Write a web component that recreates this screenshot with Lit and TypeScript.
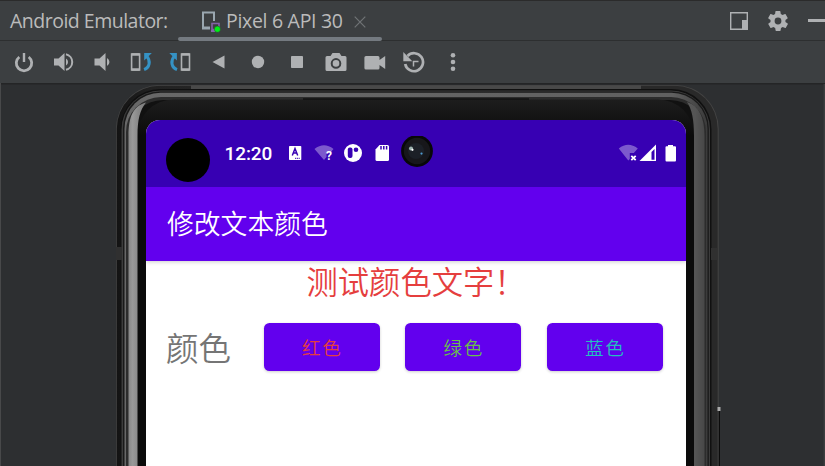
import { LitElement, html, css, svg } from "lit";
import { customElement } from "lit/decorators.js";

@customElement("emulator-tabs")
class EmulatorTabs extends LitElement {
  static styles = css`
    :host { display: flex; height: 41px; box-sizing: border-box; border-top: 1px solid #2b2b2b; border-bottom: 1px solid #2d2f30; background: #3c3f41; color: #bbb; font: 19.5px "Open Sans", "Noto Sans", sans-serif; }
    .label { box-sizing: border-box; width: 178px; padding-left: 10px; line-height: 39px; white-space: nowrap; letter-spacing: -0.5px; }
    .tab { position: relative; width: 204px; display: flex; align-items: center; height: 39px; box-sizing: border-box; padding-left: 24px; }
    .tab::after { content: ""; position: absolute; left: 0; right: 0; bottom: -1px; height: 4px; border-radius: 2px; background: #747a80; }
    .name { margin-left: 4px; width: 128px; white-space: nowrap; letter-spacing: -0.3px; }
    .tools { margin-left: auto; display: flex; align-items: center; height: 39px; }
    svg { display: block; flex: none; }
    .close { margin-top: 2px; }
    .gear { margin-left: 20px; }
    .min { margin-left: 20px; width: 17px; height: 3px; background: #afb1b3; }
  `;
  render() {
    return html`
      <div class="label">Android Emulator:</div>
      <div class="tab">
        <svg width="20" height="24" viewBox="0 0 20 24">
          <path d="M12 12V3.5H1V19H8" fill="none" stroke="#9aa7b0" stroke-width="2"/>
          <path d="M0 17.5h8v3H0z" fill="#9aa7b0"/>
          <path d="M10 14.5h7v6h-7z" fill="none" stroke="#8463a6" stroke-width="1.6"/><path d="M9 21h6v2H9z" fill="#8463a6"/>
          <circle cx="15.4" cy="20.2" r="3.1" fill="#00f018" stroke="#333" stroke-width=".5"/>
        </svg>
        <span class="name">Pixel 6 API 30</span>
        <svg class="close" width="12" height="12" viewBox="0 0 12 12"><path d="M.7.7l10.6 10.6M11.3.7L.7 11.3" stroke="#707476" stroke-width="1.2"/></svg>
      </div>
      <div class="tools">
        <svg width="18" height="18" viewBox="0 0 18 18"><path d="M.7.7h16.6v16.6H.7z" fill="none" stroke="#afb1b3" stroke-width="1.4"/><path d="M12 8h6v10h-6z" fill="#afb1b3"/></svg>
        <svg class="gear" width="20" height="20" viewBox="2 2 20 20"><path fill="#afb1b3" d="M19.4 13c0-.3.1-.7.1-1s0-.7-.1-1l2.1-1.6c.2-.2.3-.4.1-.7l-2-3.4c-.1-.2-.4-.3-.6-.2l-2.5 1c-.5-.4-1.1-.7-1.7-1l-.4-2.6c0-.2-.2-.5-.5-.5h-4c-.2 0-.4.2-.5.5L9.1 5.1c-.6.3-1.2.6-1.7 1l-2.5-1c-.2-.1-.5 0-.6.2l-2 3.4c-.1.2-.1.5.1.7L4.6 11c-.1.3-.1.7-.1 1s0 .7.1 1l-2.1 1.6c-.2.2-.3.4-.1.7l2 3.4c.1.2.4.3.6.2l2.5-1c.5.4 1.1.7 1.7 1l.4 2.6c0 .2.2.5.5.5h4c.2 0 .4-.3.5-.5l.4-2.6c.6-.3 1.2-.6 1.7-1l2.5 1c.2.1.5 0 .6-.2l2-3.4c.1-.2.1-.5-.1-.7L19.4 13zM12 15.4a3.4 3.4 0 1 1 0-6.8 3.4 3.4 0 0 1 0 6.8z"/></svg>
        <div class="min"></div>
      </div>`;
  }
}

const phoneTurn = svg`<path d="M1 3h8v16H1z" fill="none" stroke="#afb1b3" stroke-width="1.6"/><path d="M1 3.5h8M1 18.5h8" stroke="#afb1b3" stroke-width="2.5"/><path d="M13.5 18.6C19 16.5 20.5 10 16 5" fill="none" stroke="#3592c4" stroke-width="3"/><path d="M13.6 2h7.6l-7.6 7.6z" fill="#3592c4"/>`;

const toolIcons = [
  svg`<path d="M6.3 6A7.7 7.7 0 1 0 15.7 6" fill="none" stroke="#afb1b3" stroke-width="2.8"/><path d="M11 2v9" stroke="#afb1b3" stroke-width="2.4"/>`,
  svg`<path d="M2 7.5h4.5l6-5.5v18l-6-5.5H2z" fill="#afb1b3"/><path d="M14 7.5a4 4 0 0 1 0 7z" fill="#afb1b3"/><path d="M14 3.2a8 8 0 0 1 0 15.6" fill="none" stroke="#afb1b3" stroke-width="2"/>`,
  svg`<path d="M3.5 7.5h5l6-5.5v18l-6-5.5h-5z" fill="#afb1b3"/><path d="M16 7a4.5 4.5 0 0 1 0 8z" fill="#afb1b3"/>`,
  svg`<g transform="translate(.6 0)">${phoneTurn}</g>`,
  svg`<g transform="translate(21.5 0) scale(-1 1)">${phoneTurn}</g>`,
  svg`<path d="M4.5 11l12-6.5v13z" fill="#afb1b3"/>`,
  svg`<circle cx="11" cy="11" r="6.2" fill="#afb1b3"/>`,
  svg`<rect x="5" y="5" width="12" height="12" rx=".8" fill="#afb1b3"/>`,
  svg`<path d="M7.5 2h7l2 3h3.5q1.5 0 1.5 1.5v12Q21.5 20 20 20H2Q.5 20 .5 18.5v-12Q.5 5 2 5h3.5z" fill="#afb1b3"/><circle cx="11" cy="12.4" r="4.3" fill="none" stroke="#3c3f41" stroke-width="2"/>`,
  svg`<path d="M2 5h12q1.5 0 1.5 1.5V9l5.7-4v13l-5.7-4v3q0 1.5-1.5 1.5H2Q.4 18.5.4 17V6.5Q.4 5 2 5z" fill="#afb1b3"/>`,
  svg`<path d="M4.5 5A9 9 0 1 1 2.2 13" fill="none" stroke="#afb1b3" stroke-width="2.7"/><path d="M.3 1v9.3h9z" fill="#afb1b3"/><path d="M10.5 15.5v-5h5" fill="none" stroke="#afb1b3" stroke-width="1.5"/>`,
  svg`<circle cx="11" cy="4.3" r="2.3" fill="#afb1b3"/><circle cx="11" cy="11" r="2.3" fill="#afb1b3"/><circle cx="11" cy="17.7" r="2.3" fill="#afb1b3"/>`,
];

@customElement("emulator-toolbar")
class EmulatorToolbar extends LitElement {
  static styles = css`
    :host { display: flex; align-items: center; gap: 17px; height: 42px; padding-left: 13px; background: #3c3f41; }
    svg { display: block; flex: none; }
  `;
  render() {
    return toolIcons.map((i) => html`<svg width="22" height="22" viewBox="0 0 22 22">${i}</svg>`);
  }
}

@customElement("phone-frame")
class PhoneFrame extends LitElement {
  static styles = css`:host, svg { display: block; }`;
  layer(x1: number, y: number, x2: number, r: number, fill: string) {
    return svg`<rect x=${x1} y=${y} width=${x2 - x1} height="600" rx=${r} fill=${fill}/>`;
  }
  render() {
    return html`<svg width="825" height="383" viewBox="0 83 825 383">
      <defs>
        <linearGradient id="light" gradientUnits="userSpaceOnUse" x1="128" x2="704" y1="0" y2="0">
          <stop offset="0" stop-color="#858585"/><stop offset=".008" stop-color="#999"/><stop offset=".018" stop-color="#888"/><stop offset=".05" stop-color="#6c6c6c"/><stop offset=".94" stop-color="#5c5c5c"/><stop offset=".985" stop-color="#555"/><stop offset="1" stop-color="#484848"/>
        </linearGradient>
        <linearGradient id="edge" gradientUnits="userSpaceOnUse" x1="124" x2="708" y1="0" y2="0">
          <stop offset="0" stop-color="#686868"/><stop offset=".94" stop-color="#606060"/><stop offset="1" stop-color="#3a3a3a"/>
        </linearGradient>
        <linearGradient id="rim" gradientUnits="userSpaceOnUse" x1="116" x2="719" y1="0" y2="0">
          <stop offset="0" stop-color="#131313"/><stop offset=".06" stop-color="#222"/><stop offset=".124" stop-color="#242424"/><stop offset=".125" stop-color="#494949"/><stop offset=".87" stop-color="#494949"/><stop offset=".871" stop-color="#292929"/><stop offset="1" stop-color="#292929"/>
        </linearGradient>
        <linearGradient id="glass" x1="0" x2="0" y1="0" y2="1"><stop offset="0" stop-color="#1d1d1d"/><stop offset=".06" stop-color="#0b0b0b"/></linearGradient>
      </defs>
      <path d="M0 83h825v1.5H0z" fill="#242526"/>
      <path d="M0 83h1v383H0z" fill="#48494a"/><path d="M823.5 84h1.5v382h-1.5z" fill="#3b3d3e"/>
      <path d="M717 409h3v57h-3z" fill="#0b0b0b"/>
      ${this.layer(116, 85, 718.7, 44, "#444")}
      ${this.layer(116.8, 85.7, 717.7, 43, "url(#rim)")}
      ${this.layer(120.5, 89, 711.5, 40, "#101010")}
      ${this.layer(121.5, 90.5, 710, 39, "#3c3c3c")}
      ${this.layer(123, 91.5, 708.8, 37, "#191919")}
      ${this.layer(124.5, 92.7, 707.5, 36, "url(#edge)")}
      ${this.layer(126, 97, 706, 35, "#2c2c2c")}
      ${this.layer(129, 100, 704, 34, "#111")}
      ${this.layer(137.5, 99.5, 694, 36, "url(#glass)")}
      <path d="M128.5 466V136C128.5 117 133 106 146 102.5C140 110 137.5 119 137.5 136V466z" fill="url(#light)"/>
      <path d="M704.5 466V136C704.5 117 699 106 687 102C692 110 694 119 694 136V466z" fill="url(#light)"/>
      <path d="M303 99h226" stroke="#050505" stroke-width="1"/>
      <path d="M116 247h6v13h-6zM711 248h6v12h-6z" fill="#303030"/>
      <path d="M717.5 407h3v4h-3z" fill="#aaa"/>
    </svg>`;
  }
}

@customElement("status-bar")
class StatusBar extends LitElement {
  static styles = css`
    :host { position: relative; display: flex; height: 67px; background: #3700b3; color: #fff; }
    .cutout { width: 44px; height: 44px; border-radius: 50%; background: #000; margin: 18px 0 0 20px; }
    .time { width: 57.5px; margin: 23px 0 0 14.5px; font: 500 19px/22px Roboto, sans-serif; letter-spacing: -.1px; }
    svg { display: block; flex: none; }
    .row { padding-top: 16px; }
    .right { margin: 16px 8px 0 auto; }
  `;
  render() {
    return html`
      <div class="cutout"></div>
      <div class="time">12:20</div>
      <svg class="row" width="155" height="36" viewBox="282 136 155 36">
        <rect x="289" y="146" width="12.3" height="14" rx=".8" fill="#fff"/>
        <path d="M292.3 155.5l2.7-7 2.7 7M293.3 153h3.4" fill="none" stroke="#3700b3" stroke-width="1.5"/><path d="M295 158.3h5" stroke="#3700b3" stroke-width="1" stroke-dasharray="1.2 .6"/>
        <path d="M314.5 149q9.5-7.5 19 0l-3 3.5h-4v4.5l-2.5 3z" fill="#fff" opacity=".35"/>
        <text x="326" y="160" font-family="Roboto" font-weight="700" font-size="12" fill="#fff">?</text>
        <circle cx="353" cy="153" r="9" fill="#fff"/><rect x="347.8" y="147.5" width="4.7" height="10.5" rx="2" fill="#3700b3"/><circle cx="356" cy="149.7" r="2.3" fill="#3700b3"/>
        <path d="M379.5 145h8q1.5 0 1.5 1.5v13q0 1.5-1.5 1.5h-10.5q-1.5 0-1.5-1.5V149.5z" fill="#fff"/><path d="M381 146v3.5M383.8 146v3.5M386.6 146v3.5" stroke="#3700b3" stroke-width="1.5"/>
        <circle cx="417" cy="151" r="15.9" fill="#080808"/><circle cx="417" cy="151" r="13.2" fill="#17171b"/><circle cx="416" cy="151" r="8" fill="#1c2027"/>
        <circle cx="411" cy="148.5" r="2" fill="#9eb3b0"/><circle cx="412.5" cy="149.8" r="1.1" fill="#fff"/><circle cx="421.5" cy="153.6" r="1.1" fill="#4f9bd0"/>
      </svg>
      <svg class="right" width="60" height="36" viewBox="618 136 60 36">
        <path d="M618.8 148.5q9.3-7.5 19 0l-4 4.5h-4v6l-1.5 1.5z" fill="#fff" opacity=".35"/>
        <path d="M631.3 155.8l4.4 4.4M635.7 155.8l-4.4 4.4" stroke="#fff" stroke-width="1.8"/>
        <path d="M639.5 161l16.5-16.5V161z" fill="#fff"/><path d="M651.5 152l3-3v10.7h-3z" fill="#3700b3"/>
        <path d="M668 145h5v1.3h2q1 0 1 1v13q0 1.2-1 1.2h-8.5q-1 0-1-1.2v-13q0-1 1-1h1.5z" fill="#fff"/>
      </svg>`;
  }
}

@customElement("phone-screen")
class PhoneScreen extends LitElement {
  static styles = css`
    :host { display: block; width: 540px; height: 346px; background: #fff; border-radius: 14px 14px 0 0; overflow: hidden; font-family: "Noto Sans CJK SC", sans-serif; font-weight: 350; }
    .bar { height: 73.5px; box-sizing: border-box; padding-left: 21px; background: #6200ee; color: #fff; font-size: 26.8px; line-height: 71px; box-shadow: 0 1px 4px #0003; }
    .heading { height: 45px; padding-left: 160.5px; color: #e53e3e; font-size: 31.3px; line-height: 40px; white-space: nowrap; }
    .controls { display: flex; align-items: center; height: 48px; margin-top: 17.5px; padding-left: 20px; }
    .label { flex: none; width: 98px; color: #757575; font-size: 32.5px; line-height: 48px; }
    .button { flex: none; width: 115.8px; height: 48px; margin-right: 25.7px; border-radius: 5.5px; background: #6200ee; text-align: center; font-size: 18.6px; line-height: 47px; letter-spacing: 1.7px; text-indent: .8px; box-shadow: 0 1px 3px #0003; }
    .red { color: #e53e3e; } .green { color: #6abf4b; } .blue { color: #24bfc0; }
  `;
  render() {
    return html`
      <status-bar></status-bar>
      <div class="bar">修改文本颜色</div>
      <div class="heading">测试颜色文字！</div>
      <div class="controls">
        <div class="label">颜色</div>
        <div class="button red">红色</div>
        <div class="button green">绿色</div>
        <div class="button blue">蓝色</div>
      </div>`;
  }
}

@customElement("app-root")
class AppRoot extends LitElement {
  static styles = css`
    :host { display: block; width: 825px; height: 466px; overflow: hidden; background: #2d2f31; }
    .stage { display: grid; height: 383px; }
    .stage > * { grid-area: 1 / 1; }
    .screen { margin: 37px 0 0 146px; }
  `;
  render() {
    return html`
      <emulator-tabs></emulator-tabs>
      <emulator-toolbar></emulator-toolbar>
      <div class="stage">
        <phone-frame></phone-frame>
        <phone-screen class="screen"></phone-screen>
      </div>`;
  }
}
